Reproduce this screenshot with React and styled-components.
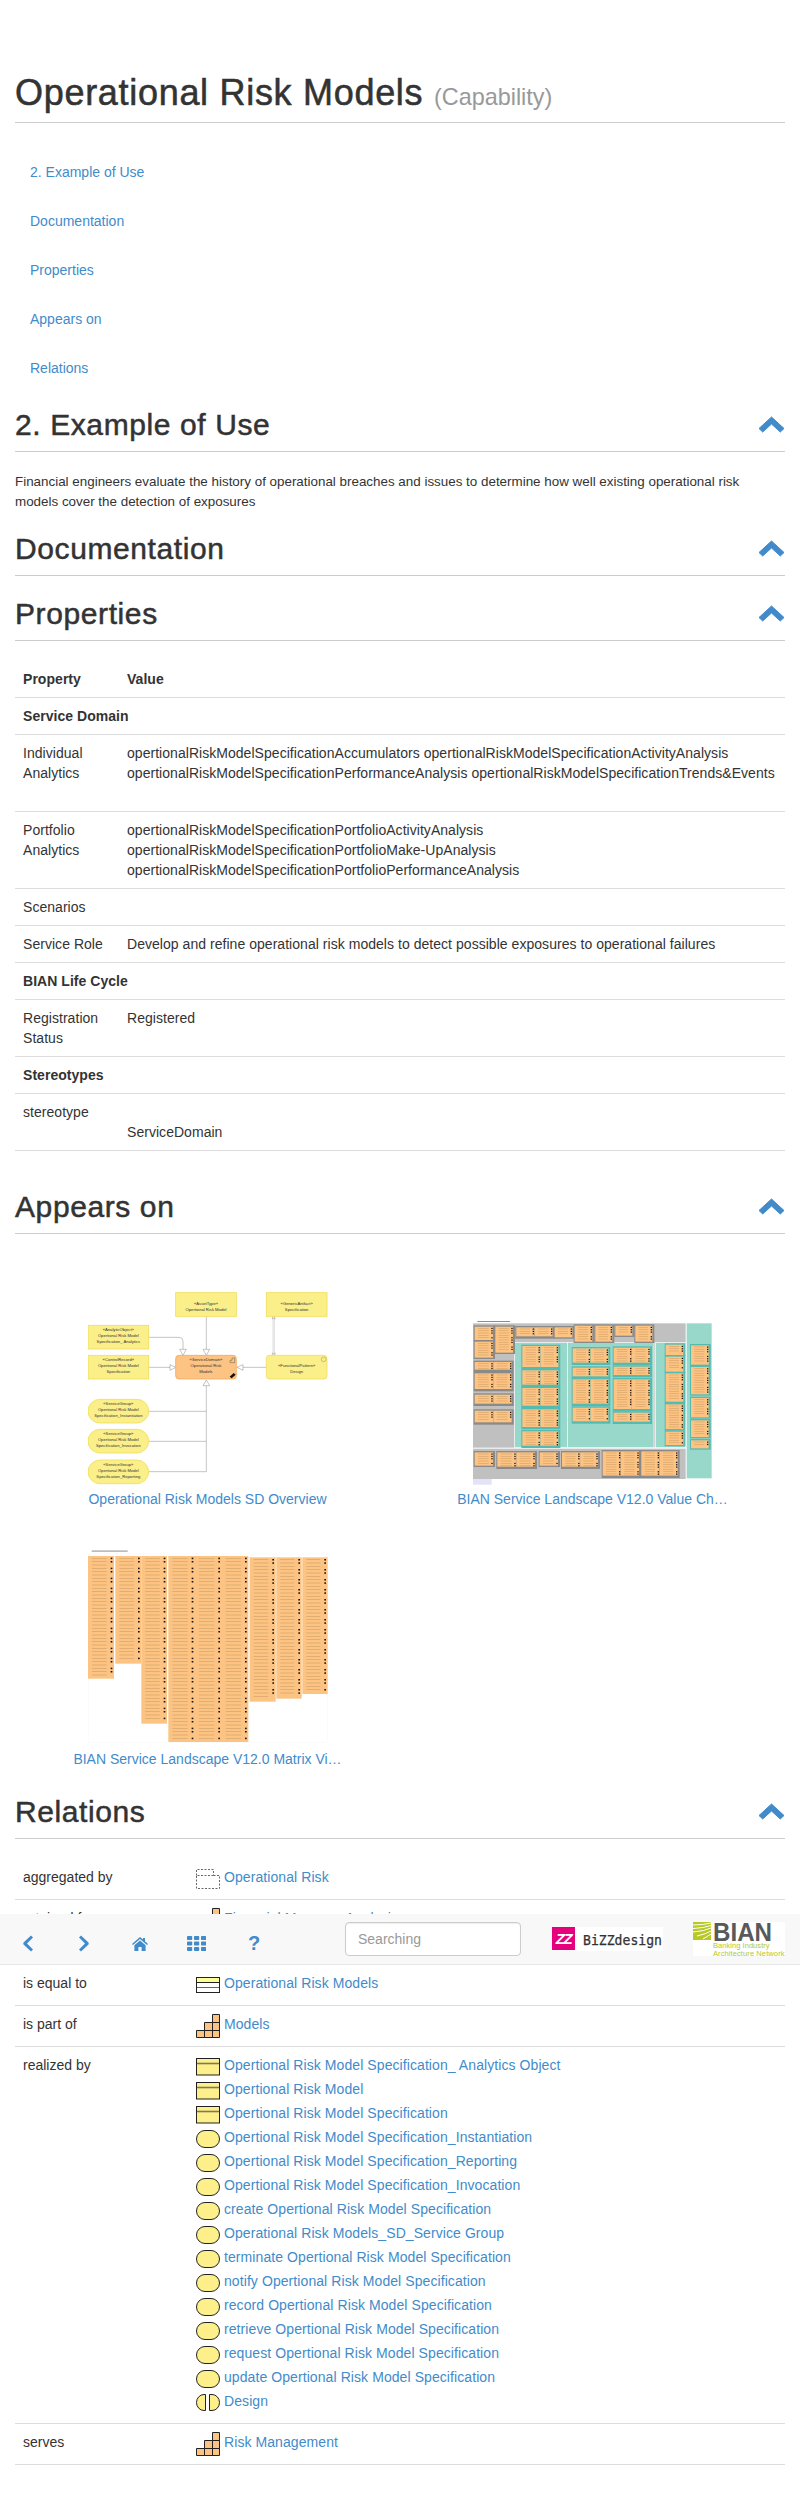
import React from "react";
import styled, { createGlobalStyle } from "styled-components";

const Global = createGlobalStyle`
  html, body { margin: 0; padding: 0; background: #fff; }
  body { font-family: "Liberation Sans", Arial, sans-serif; font-size: 14px; line-height: 20px; color: #333; }
  * { box-sizing: border-box; }
`;
const BLUE = "#428bca";

const Page = styled.div`
  position: relative;
  width: 800px;
  height: 2514px;
  padding: 73px 15px 0;
  overflow: hidden;
`;
const Title = styled.h1`
  margin: 0;
  height: 50px;
  padding-bottom: 9px;
  border-bottom: 1px solid #ccc;
  font-size: 36px;
  line-height: 40px;
  font-weight: 400;
  letter-spacing: 0.7px;
  -webkit-text-stroke: 0.55px #333;
  color: #333;
`;
const TitleType = styled.small`
  font-size: 23.4px;
  letter-spacing: 0;
  color: #999;
  -webkit-text-stroke: 0;
`;
const TocList = styled.nav`
  margin-top: 25px;
  padding-left: 15px;
  display: flex;
  flex-direction: column;
`;
const TocLink = styled.a`
  height: 49px;
  line-height: 49px;
  color: ${BLUE};
  text-decoration: none;
`;
const SectionHead = styled.div`
  display: flex;
  justify-content: space-between;
  align-items: center;
  margin-top: ${(p) => p.$top}px;
  height: 43px;
  padding-bottom: 12px;
  border-bottom: 1px solid #ccc;
`;
const SectionTitle = styled.h2`
  margin: 0;
  font-size: 30px;
  line-height: 33px;
  font-weight: 400;
  letter-spacing: 0.6px;
  -webkit-text-stroke: 0.5px #333;
  color: #333;
`;
const Paragraph = styled.p`
  margin: 20px 0 0;
  font-size: 13.4px;
`;
const PropTable = styled.table`
  width: 100%;
  margin-top: 20px;
  border-collapse: collapse;
  table-layout: fixed;
  letter-spacing: 0.04px;
`;
const Th = styled.th`
  padding: 8px;
  text-align: left;
  font-weight: 700;
  border-bottom: 1px solid #ddd;
`;
const Td = styled.td`
  padding: 8px;
  vertical-align: top;
  font-weight: ${(p) => (p.$bold ? 700 : 400)};
  border-bottom: 1px solid #ddd;
`;
const ValueLine = styled.div`
  white-space: nowrap;
  min-height: 20px;
`;
const CardGrid = styled.div`
  display: grid;
  grid-template-columns: 385px 385px;
  row-gap: 40px;
  margin-top: 55px;
`;
const Card = styled.div`
  display: flex;
  flex-direction: column;
  align-items: center;
`;
const Thumb = styled.svg`
  display: block;
  width: 240px;
  height: 199px;
  margin-top: 1px;
`;
const CardLabel = styled.a`
  white-space: nowrap;
  color: ${BLUE};
  text-decoration: none;
  line-height: 20px;
`;
const Relations = styled.div`
  margin-top: 20px;
`;
const RelationRow = styled.div`
  display: grid;
  grid-template-columns: 165px 1fr;
  column-gap: 8px;
  padding: 8px;
  border-bottom: 1px solid #ddd;
`;
const RelationLabel = styled.div`
  line-height: 20px;
`;
const LinkList = styled.div`
  display: flex;
  flex-direction: column;
`;
const LinkLine = styled.a`
  display: flex;
  gap: 4px;
  height: 24px;
  color: ${BLUE};
  text-decoration: none;
  line-height: 20px;
  letter-spacing: 0.08px;
`;
const Icon = styled.svg`
  flex: none;
  display: block;
  width: 24px;
  height: 24px;
`;
const Toolbar = styled.div`
  position: absolute;
  left: 0;
  right: 0;
  top: 1914px;
  height: 51px;
  background: #f8f8f8;
  border-bottom: 1px solid #e7e7e7;
  display: flex;
  align-items: flex-start;
  padding-left: 23px;
`;
const ToolGroup = styled.div`
  display: flex;
  width: 322px;
  height: 50px;
  align-items: flex-start;
`;
const ToolIcon = styled.svg`
  display: block;
  flex: none;
  margin-top: ${(p) => p.$top}px;
  margin-right: ${(p) => p.$gap}px;
  fill: ${BLUE};
`;
const HelpMark = styled.span`
  margin-top: 19px;
  font-size: 20px;
  line-height: 20px;
  font-weight: 700;
  color: ${BLUE};
`;
const Search = styled.input`
  width: 176px;
  height: 34px;
  margin-top: 8px;
  padding: 6px 12px;
  border: 1px solid #ccc;
  border-radius: 4px;
  background: #fff;
  box-shadow: inset 0 1px 1px rgba(0, 0, 0, 0.075);
  font: 14px/20px "Liberation Sans", Arial, sans-serif;
  color: #555;
  &::placeholder { color: #999; opacity: 1; }
`;
const BizzLogo = styled.svg`
  display: block;
  width: 111px;
  height: 24px;
  margin: 13px 0 0 31px;
`;
const BianLogo = styled.svg`
  display: block;
  width: 92px;
  height: 42px;
  margin: 3px 0 0 30px;
`;

const Chevron = () => (
  <svg width="27" height="17" viewBox="0 0 27 17" aria-hidden="true">
    <path d="M13.5 1 L26 12.5 L22.3 16 L13.5 8 L4.7 16 L1 12.5 Z" fill={BLUE} stroke={BLUE} strokeWidth="1" strokeLinejoin="round" />
  </svg>
);

const Section = ({ top, children }) => (
  <SectionHead $top={top}>
    <SectionTitle>{children}</SectionTitle>
    <Chevron />
  </SectionHead>
);

const S = "#222";
const ObjIcon = ({ top = 3 }) => (
  <Icon viewBox="0 0 24 24">
    <rect x="0.5" y={top + 0.5} width="23" height="16.5" fill="#fdf08b" stroke={S} />
    <line x1="1" x2="23" y1={top + 5.5} y2={top + 5.5} stroke="#7d7a5a" strokeWidth="1.6" />
  </Icon>
);
const TableIcon = () => (
  <Icon viewBox="0 0 24 24">
    <rect x="0.5" y="4.5" width="23" height="15" fill="#fff" stroke={S} />
    <rect x="1" y="5" width="22" height="4" fill="#ffff99" />
    <line x1="1" x2="23" y1="9.5" y2="9.5" stroke={S} />
    <line x1="1" x2="23" y1="14.5" y2="14.5" stroke="#666" />
  </Icon>
);
const PillIcon = () => (
  <Icon viewBox="0 0 24 24">
    <rect x="0.5" y="3.5" width="23" height="17" rx="8.5" fill="#fdf08b" stroke={S} />
  </Icon>
);
const SplitIcon = () => (
  <Icon viewBox="0 0 24 24">
    <path d="M9.5 3.5 H8 a7.5 8 0 0 0 0 16 H9.5 Z M13.5 3.5 H16 a7.5 8 0 0 1 0 16 H13.5 Z" fill="#fdf08b" stroke={S} />
  </Icon>
);
const StairIcon = () => (
  <Icon viewBox="0 0 24 24">
    <path d="M16.5 0.5 H23.5 V23.5 H0.5 V16.5 H8.5 V8.5 H16.5 Z" fill="#fdc383" stroke={S} />
    <path d="M16.5 8.5 H23.5 M8.5 16.5 H23.5 M8.5 16.5 V23.5 M16.5 8.5 V23.5" fill="none" stroke={S} />
  </Icon>
);
const GroupIcon = () => (
  <Icon viewBox="0 0 24 24">
    <path d="M0.5 8.5 V2.5 H17.5 V8.5 M17.5 8.5 H23.5 V21.5 H0.5 V8.5 H17.5" fill="none" stroke="#666" strokeDasharray="2 1.5" />
  </Icon>
);

const overviewBoxes = [
  { x: 348, y: 68, rx: 0, t: ["«AssetType»", "Opertional Risk Model"] },
  { x: 620, y: 68, rx: 0, t: ["«GenericArtifact»", "Specification"] },
  { x: 85, y: 166, rx: 0, t: ["«AnalyticObject»", "Opertional Risk Model", "Specification_ Analytics"] },
  { x: 85, y: 256, rx: 0, t: ["«ControlRecord»", "Opertional Risk Model", "Specification"] },
  { x: 348, y: 256, rx: 10, orange: true, t: ["«ServiceDomain»", "Operational Risk", "Models"] },
  { x: 620, y: 256, rx: 10, t: ["«FunctionalPattern»", "Design"] },
  { x: 85, y: 388, rx: 36, t: ["«ServiceGroup»", "Opertional Risk Model", "Specification_Instantiation"] },
  { x: 85, y: 478, rx: 36, t: ["«ServiceGroup»", "Opertional Risk Model", "Specification_Invocation"] },
  { x: 85, y: 570, rx: 36, t: ["«ServiceGroup»", "Opertional Risk Model", "Specification_Reporting"] },
];

const OverviewDiagram = () => (
  <Thumb viewBox="85 60 720 597">
    <g fill="none" stroke="#a8a8a8" strokeWidth="2">
      <path d="M440 137 V238 M268 202 H358 Q370 202 370 214 V238 M268 292 H332 M620 292 H550 M268 424 H440 M268 514 H440 M268 605 H440 M440 605 V348" />
      <path d="M640 140 V254 M644 140 V254" stroke="#ccc" />
    </g>
    <g fill="#fff" stroke="#888" strokeWidth="1.5">
      <path d="M430 238 H450 L440 256 Z M360 238 H380 L370 256 Z M331 284 L348 292 L331 301 Z M550 284 L532 292 L550 301 Z M430 347 H450 L440 330 Z" />
      <path d="M637 146 L642 138 L647 146 Z M637 250 L642 258 L647 250 Z" />
    </g>
    {overviewBoxes.map((b, i) => (
      <g key={i}>
        <rect x={b.x} y={b.y} width="182" height="71" rx={b.rx} fill={b.orange ? "#fdc383" : "#fbef8a"} stroke={b.orange ? "#f4a95f" : "#f1de5c"} strokeWidth="2.5" />
        {b.t.map((line, j) => (
          <text key={j} x={b.x + 91} y={b.y + (b.t.length === 2 ? 36 : 18) + j * 18} fontFamily="Liberation Sans, Arial, sans-serif" fontSize="12.5" textAnchor="middle" fill="#333">
            {line}
          </text>
        ))}
      </g>
    ))}
    <path d="M511 278 V271 H517 V264 H525 V278 Z" fill="none" stroke="#555" strokeWidth="1.4" />
    <path d="M510 320 L522 309 L528 314 L516 325 Z" fill="#111" />
    <circle cx="792" cy="268" r="7" fill="none" stroke="#888" strokeWidth="1.5" />
  </Thumb>
);

/* a block of service domains inside the value-chain thumbnail */
const Cluster = ({ x, y, w, h, cols = 1, frame = "#8a8a8a" }) => {
  const cw = (w - 2) / cols;
  const rows = Math.floor((h - 4) / 7);
  return (
    <g>
      <rect x={x - 3} y={y - 4} width={w + 6} height={h + 8} fill={frame} />
      {Array.from({ length: cols }).map((_, c) => {
        const cx = x + c * cw;
        return (
          <g key={c}>
            <rect x={cx} y={y} width={cw - 1} height={h - (cols > 1 ? 3 : 0)} fill="#fdc383" />
            {Array.from({ length: rows }).map((_, r) => (
              <g key={r}>
                <rect x={cx + 10} y={y + 4 + r * 7} width={cw - 24} height="1.8" fill="#a98352" opacity="0.5" />
                <rect x={cx + cw - 6} y={y + 3.5 + r * 7} width="4" height={r % 4 === 3 ? 0 : 3.6} fill="#111" />
              </g>
            ))}
          </g>
        );
      })}
    </g>
  );
};
const TEAL = "#55bab0";
const clusters = [
  [102, 170, 58, 40, 1], [164, 170, 56, 78, 1], [102, 215, 58, 48, 1],
  [102, 276, 114, 26, 2], [102, 310, 114, 50, 2], [102, 374, 114, 30, 2], [102, 422, 114, 38, 2],
  [227, 172, 112, 30, 2], [342, 172, 56, 30, 1], [402, 167, 56, 48, 1], [464, 167, 54, 48, 1], [524, 167, 54, 30, 1], [584, 167, 54, 48, 1],
  [245, 228, 111, 66, 2, TEAL], [245, 301, 111, 46, 2, TEAL], [245, 354, 111, 56, 2, TEAL], [245, 418, 111, 56, 2, TEAL], [245, 484, 111, 46, 2, TEAL],
  [396, 235, 110, 46, 2, TEAL], [396, 293, 110, 29, 2, TEAL], [396, 328, 110, 76, 2, TEAL], [396, 413, 110, 44, 2, TEAL],
  [519, 233, 112, 48, 2, TEAL], [519, 290, 112, 28, 2, TEAL], [519, 328, 112, 92, 2, TEAL], [519, 428, 112, 30, 2, TEAL],
  [675, 224, 56, 31, 1, TEAL], [675, 260, 56, 45, 1, TEAL], [675, 310, 56, 85, 1, TEAL], [675, 403, 56, 74, 1, TEAL], [675, 485, 56, 40, 1, TEAL],
  [751, 226, 56, 58, 1, TEAL], [751, 291, 56, 82, 1, TEAL], [751, 384, 56, 58, 1, TEAL], [751, 451, 56, 50, 1, TEAL], [751, 511, 56, 24, 1, TEAL],
  [102, 547, 58, 40, 1], [170, 547, 116, 46, 2], [297, 547, 58, 40, 1], [364, 547, 111, 46, 2], [486, 544, 112, 76, 2], [602, 544, 112, 76, 2],
];
const LandscapeDiagram = () => (
  <Thumb viewBox="97 60 720 597">
    <rect x="110" y="153" width="98" height="2.4" fill="#333" opacity="0.7" />
    <rect x="97" y="160" width="638" height="373" fill="#c0c0c0" />
    <rect x="97" y="536" width="638" height="91" fill="#c0c0c0" />
    <rect x="222" y="218" width="158" height="315" fill="#98d8cb" stroke="#fff" strokeWidth="2" />
    <rect x="380" y="218" width="260" height="315" fill="#98d8cb" stroke="#fff" strokeWidth="2" />
    <rect x="644" y="218" width="91" height="315" fill="#98d8cb" stroke="#fff" strokeWidth="2" />
    <rect x="738" y="160" width="75" height="465" fill="#98d8cb" />
    <rect x="97" y="627" width="56" height="17" fill="#e2e2f8" />
    {clusters.map(([x, y, w, h, cols, frame], i) => (
      <Cluster key={i} x={x} y={y} w={w} h={h} cols={cols} frame={frame} />
    ))}
  </Thumb>
);

const matrixCols = [
  { x: 85, y: 78, w: 78, h: 368, c: 1 },
  { x: 167, y: 78, w: 78, h: 323, c: 1 },
  { x: 245, y: 78, w: 77, h: 503, c: 1 },
  { x: 326, y: 78, w: 240, h: 558, c: 3 },
  { x: 570, y: 82, w: 78, h: 433, c: 1 },
  { x: 650, y: 82, w: 76, h: 424, c: 1 },
  { x: 728, y: 82, w: 76, h: 410, c: 1 },
];
const MatrixDiagram = () => (
  <Thumb viewBox="85 60 720 597">
    <rect x="96" y="62" width="108" height="2.4" fill="#333" opacity="0.7" />
    <rect x="85.5" y="72" width="718" height="565" fill="#fff" stroke="#f2f2f2" />
    {matrixCols.map((m, i) => {
      const cw = m.w / m.c;
      const rows = Math.floor((m.h - 8) / 10);
      return (
        <g key={i}>
          <rect x={m.x} y={m.y} width={m.w} height={m.h} fill="#fdc383" />
          {Array.from({ length: m.c }).map((_, c) => (
            <g key={c}>
              {Array.from({ length: rows }).map((_, r) => (
                <g key={r}>
                  <rect x={m.x + c * cw + 12} y={m.y + 6 + r * 10} width={cw - 34} height="2" fill="#a98352" opacity="0.5" />
                  <rect x={m.x + c * cw + cw - 10} y={m.y + 5 + r * 10} width="5" height={r % 3 === 2 ? 0 : 4.5} fill="#111" />
                </g>
              ))}
            </g>
          ))}
        </g>
      );
    })}
  </Thumb>
);

const realized = [
  [ObjIcon, "Opertional Risk Model Specification_ Analytics Object"],
  [ObjIcon, "Opertional Risk Model"],
  [ObjIcon, "Opertional Risk Model Specification"],
  [PillIcon, "Opertional Risk Model Specification_Instantiation"],
  [PillIcon, "Opertional Risk Model Specification_Reporting"],
  [PillIcon, "Opertional Risk Model Specification_Invocation"],
  [PillIcon, "create Opertional Risk Model Specification"],
  [PillIcon, "Operational Risk Models_SD_Service Group"],
  [PillIcon, "terminate Opertional Risk Model Specification"],
  [PillIcon, "notify Opertional Risk Model Specification"],
  [PillIcon, "record Opertional Risk Model Specification"],
  [PillIcon, "retrieve Opertional Risk Model Specification"],
  [PillIcon, "request Opertional Risk Model Specification"],
  [PillIcon, "update Opertional Risk Model Specification"],
  [SplitIcon, "Design"],
];

const Item = ({ icon: I, children }) => (
  <LinkLine href="#">
    <I />
    <span>{children}</span>
  </LinkLine>
);

export default function App() {
  return (
    <Page>
      <Global />
      <Title>
        Operational Risk Models <TitleType>(Capability)</TitleType>
      </Title>
      <TocList>
        {["2. Example of Use", "Documentation", "Properties", "Appears on", "Relations"].map((t) => (
          <TocLink key={t} href="#">{t}</TocLink>
        ))}
      </TocList>

      <Section top={16}>2. Example of Use</Section>
      <Paragraph>
        Financial engineers evaluate the history of operational breaches and issues to determine how well existing operational risk models cover the detection of exposures
      </Paragraph>
      <Section top={21}>Documentation</Section>
      <Section top={22}>Properties</Section>

      <PropTable>
        <colgroup>
          <col style={{ width: 104 }} />
          <col />
        </colgroup>
        <thead>
          <tr><Th>Property</Th><Th>Value</Th></tr>
        </thead>
        <tbody>
          <tr><Td $bold colSpan={2}>Service Domain</Td></tr>
          <tr>
            <Td>Individual Analytics</Td>
            <Td>
              <ValueLine>opertionalRiskModelSpecificationAccumulators opertionalRiskModelSpecificationActivityAnalysis</ValueLine>
              <ValueLine>opertionalRiskModelSpecificationPerformanceAnalysis opertionalRiskModelSpecificationTrends&amp;Events</ValueLine>
              <ValueLine />
            </Td>
          </tr>
          <tr>
            <Td>Portfolio Analytics</Td>
            <Td>
              <ValueLine>opertionalRiskModelSpecificationPortfolioActivityAnalysis</ValueLine>
              <ValueLine>opertionalRiskModelSpecificationPortfolioMake-UpAnalysis</ValueLine>
              <ValueLine>opertionalRiskModelSpecificationPortfolioPerformanceAnalysis</ValueLine>
            </Td>
          </tr>
          <tr><Td>Scenarios</Td><Td /></tr>
          <tr>
            <Td>Service Role</Td>
            <Td>Develop and refine operational risk models to detect possible exposures to operational failures</Td>
          </tr>
          <tr><Td $bold colSpan={2}>BIAN Life Cycle</Td></tr>
          <tr><Td>Registration Status</Td><Td>Registered</Td></tr>
          <tr><Td $bold colSpan={2}>Stereotypes</Td></tr>
          <tr>
            <Td>stereotype</Td>
            <Td>
              <ValueLine />
              <ValueLine>ServiceDomain</ValueLine>
            </Td>
          </tr>
        </tbody>
      </PropTable>

      <Section top={40}>Appears on</Section>
      <CardGrid>
        <Card>
          <OverviewDiagram />
          <CardLabel href="#">Operational Risk Models SD Overview</CardLabel>
        </Card>
        <Card>
          <LandscapeDiagram />
          <CardLabel href="#">BIAN Service Landscape V12.0 Value Ch…</CardLabel>
        </Card>
        <Card>
          <MatrixDiagram />
          <CardLabel href="#">BIAN Service Landscape V12.0 Matrix Vi…</CardLabel>
        </Card>
      </CardGrid>

      <Section top={27}>Relations</Section>
      <Relations>
        <RelationRow>
          <RelationLabel>aggregated by</RelationLabel>
          <LinkList><Item icon={GroupIcon}>Operational Risk</Item></LinkList>
        </RelationRow>
        <RelationRow>
          <RelationLabel>retained from</RelationLabel>
          <LinkList>
            <Item icon={StairIcon}>Financial Message Analysis</Item>
            <LinkLine as="div" />
          </LinkList>
        </RelationRow>
        <RelationRow>
          <RelationLabel>is equal to</RelationLabel>
          <LinkList><Item icon={TableIcon}>Operational Risk Models</Item></LinkList>
        </RelationRow>
        <RelationRow>
          <RelationLabel>is part of</RelationLabel>
          <LinkList><Item icon={StairIcon}>Models</Item></LinkList>
        </RelationRow>
        <RelationRow>
          <RelationLabel>realized by</RelationLabel>
          <LinkList>
            {realized.map(([I, t]) => <Item key={t} icon={I}>{t}</Item>)}
          </LinkList>
        </RelationRow>
        <RelationRow>
          <RelationLabel>serves</RelationLabel>
          <LinkList><Item icon={StairIcon}>Risk Management</Item></LinkList>
        </RelationRow>
      </Relations>

      <Toolbar>
        <ToolGroup>
          <ToolIcon $top={21} $gap={46} width="10" height="17" viewBox="0 0 10 17">
            <path d="M8 0.5 L10 2.5 L4 8.5 L10 14.5 L8 16.5 L0.5 9.5 Q0 8.5 0.5 7.5 Z" />
          </ToolIcon>
          <ToolIcon $top={21} $gap={43} width="10" height="17" viewBox="0 0 10 17">
            <path d="M2 0.5 L0 2.5 L6 8.5 L0 14.5 L2 16.5 L9.5 9.5 Q10 8.5 9.5 7.5 Z" />
          </ToolIcon>
          <ToolIcon $top={23} $gap={39} width="16" height="14" viewBox="0 0 16 14">
            <path d="M8 0 L11 2.6 V1 H13 V4.3 L16 7 L15 8 L8 2 L1 8 L0 7 Z M8 3.4 L13.6 8.2 V14 H9.6 V10 H6.4 V14 H2.4 V8.2 Z" />
          </ToolIcon>
          <ToolIcon $top={22} $gap={42} width="19" height="15" viewBox="0 0 19 15">
            {[0, 7, 14].map((x) =>
              [0, 5.5, 11].map((y) => <rect key={`${x}-${y}`} x={x} y={y} width="5.2" height="4" rx="0.8" />)
            )}
          </ToolIcon>
          <HelpMark>?</HelpMark>
        </ToolGroup>
        <Search placeholder="Searching" />
        <BizzLogo viewBox="0 0 111 24">
          <rect width="111" height="24" fill="#fff" />
          <rect width="23" height="23" fill="#e6007e" />
          <text x="11.5" y="17" fontFamily="Liberation Sans, Arial, sans-serif" fontWeight="700" fontStyle="italic" fontSize="15" fill="#fff" textAnchor="middle" letterSpacing="-1.5">ZZ</text>
          <text x="31" y="17.5" fontFamily="DejaVu Sans Mono, monospace" fontSize="13.3" fill="#333" stroke="#333" strokeWidth="0.25" textLength="79" lengthAdjust="spacingAndGlyphs">BiZZdesign</text>
        </BizzLogo>
        <BianLogo viewBox="0 -5 92 42">
          <rect width="92" height="34" fill="#fff" />
          <rect width="18" height="18" fill="#b7c925" />
          <path d="M0 3 Q10 3 18 1 M0 6.5 Q11 6 18 3.5 M0 10 Q12 9 18 6 M4 14 Q13 12 18 9 M10 17 Q15 14 18 12" fill="none" stroke="#fff" strokeWidth="1" />
          <text x="20" y="19" fontFamily="Liberation Sans, Arial, sans-serif" fontWeight="700" fontSize="25" fill="#58595b" textLength="59" lengthAdjust="spacingAndGlyphs">BIAN</text>
          <text x="20" y="26" fontFamily="Liberation Sans, Arial, sans-serif" fontSize="7.6" fill="#b7c925">Banking Industry</text>
          <text x="20" y="33.5" fontFamily="Liberation Sans, Arial, sans-serif" fontSize="7.6" fill="#b7c925" textLength="71.5">Architecture Network</text>
        </BianLogo>
      </Toolbar>
    </Page>
  );
}
